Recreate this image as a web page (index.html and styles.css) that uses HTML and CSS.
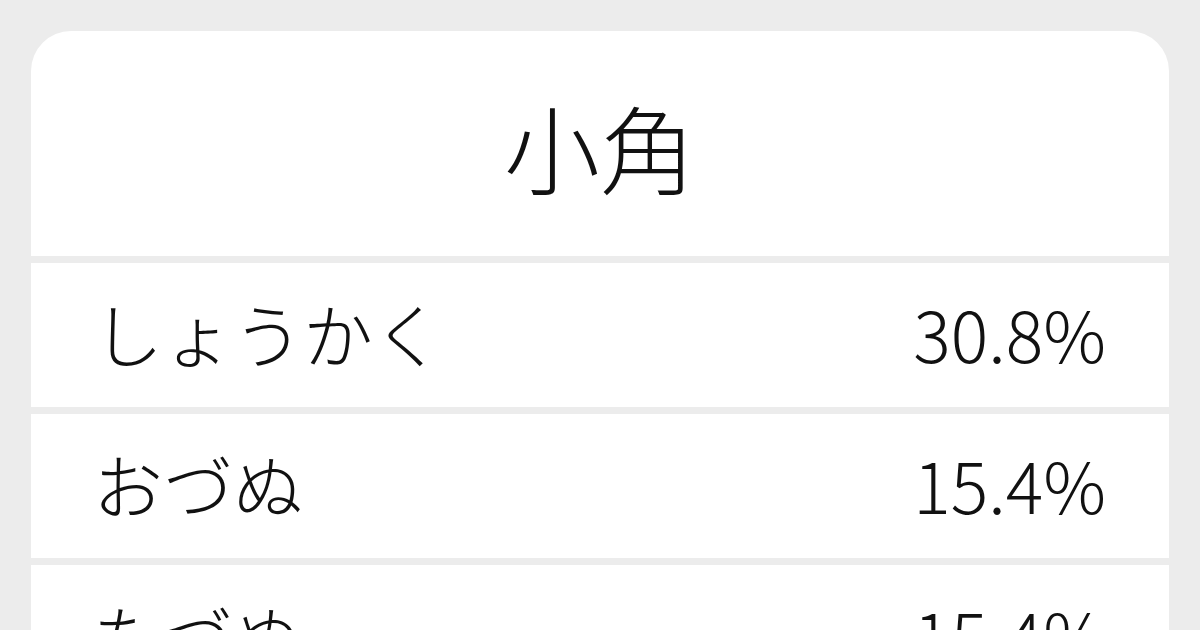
FILE: index.html
```html
<!DOCTYPE html>
<html lang="ja">
<head>
<meta charset="utf-8">
<link rel="stylesheet" href="styles.css">
</head>
<body>
<div class="card">
  <div class="header">小角</div>
  <div class="row"><span class="reading">しょうかく</span><span class="pct">30.8%</span></div>
  <div class="row"><span class="reading">おづぬ</span><span class="pct">15.4%</span></div>
  <div class="row"><span class="reading">たづぬ</span><span class="pct">15.4%</span></div>
</div>
</body>
</html>
```

FILE: styles.css
```css
html, body {
  margin: 0;
  padding: 0;
  background: #ececec;
  width: 1200px;
  height: 630px;
  overflow: hidden;
}
body {
  font-family: "Noto Sans CJK JP", "Noto Sans", sans-serif;
  font-weight: 300;
  color: #111;
  padding: 31px 31px 0 31px;
  box-sizing: border-box;
}
.card {
  width: 1138px;
  height: 599px;
  border-radius: 40px 40px 0 0;
  overflow: hidden;
  display: flex;
  flex-direction: column;
  gap: 7px;
}
.header {
  background: #fff;
  height: 225px;
  flex-shrink: 0;
  display: flex;
  align-items: center;
  justify-content: center;
  font-size: 96px;
  line-height: 1;
  padding-top: 4px;
  box-sizing: border-box;
}
.row {
  background: #fff;
  height: 144px;
  flex-shrink: 0;
  display: flex;
  align-items: center;
  justify-content: space-between;
  padding: 0 63px 4px 62px;
  font-size: 70px;
  line-height: 1;
  box-sizing: border-box;
}
```
